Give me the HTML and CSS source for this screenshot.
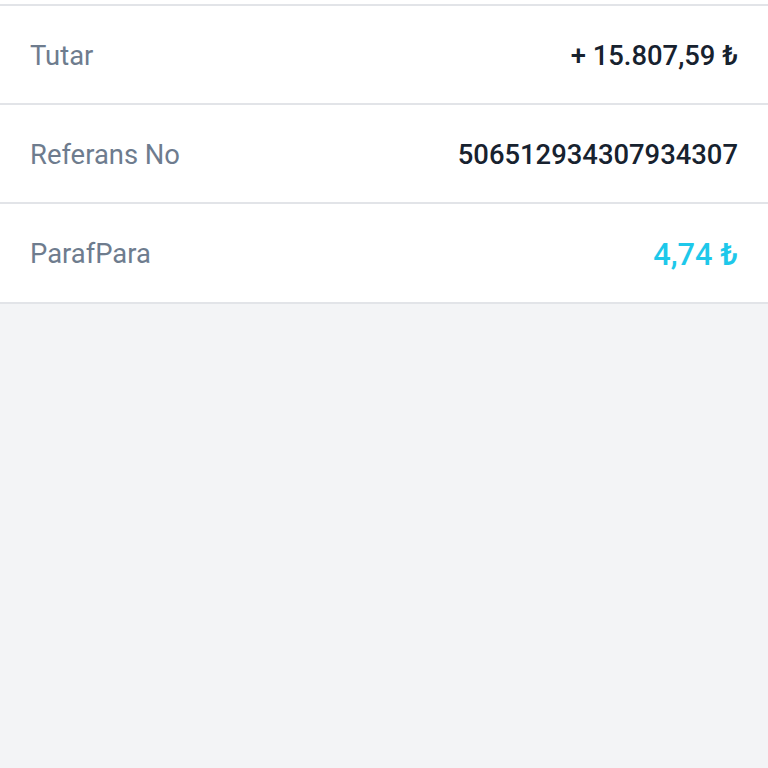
FILE: index.html
```html
<!DOCTYPE html>
<html lang="tr">
<head>
<meta charset="utf-8">
<title>Detay</title>
<link rel="stylesheet" href="styles.css">
</head>
<body>
<div class="list">
  <div class="row">
    <span class="label">Tutar</span>
    <span class="value">+ 15.807,59 ₺</span>
  </div>
  <div class="row">
    <span class="label">Referans No</span>
    <span class="value">506512934307934307</span>
  </div>
  <div class="row">
    <span class="label">ParafPara</span>
    <span class="value accent">4,74 ₺</span>
  </div>
</div>
</body>
</html>
```
FILE: styles.css
```css
html, body {
  margin: 0;
  padding: 0;
  background: #f3f4f6;
  font-family: Roboto, "Noto Sans", sans-serif;
}
.list {
  background: #ffffff;
  padding-top: 4px;
  padding-bottom: 1px;
  border-bottom: 2px solid #e2e4e8;
}
.row {
  box-sizing: border-box;
  display: flex;
  align-items: center;
  justify-content: space-between;
  height: 99px;
  padding: 3px 30px 0;
  border-top: 2px solid #e2e4e8;
}
.label {
  font-size: 27.4px;
  color: #6e7c8e;
}
.value {
  font-size: 27.4px;
  font-weight: 500;
  color: #17222f;
}
.accent {
  font-size: 30.8px;
  color: #1ec8ea;
}
```
